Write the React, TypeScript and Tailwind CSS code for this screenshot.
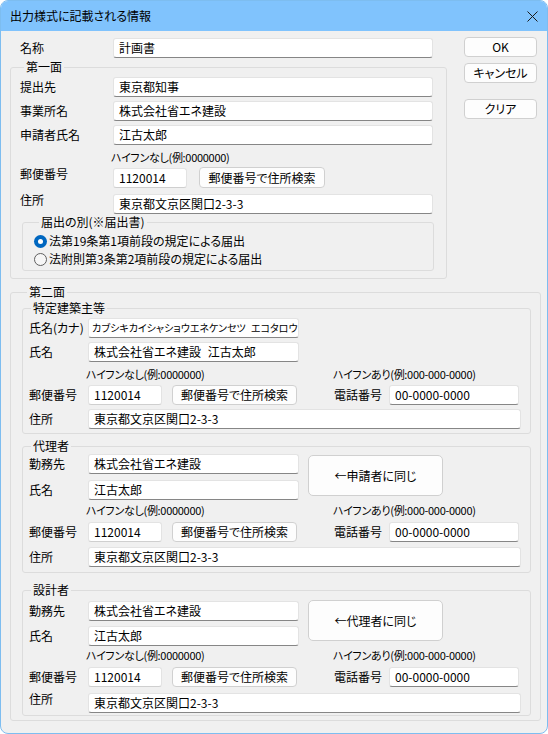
import React from 'react';

const box =
  'h-[20px] shrink-0 bg-white border border-[#e3e3e3] border-b-[#868686] rounded-[3px] leading-[18px] whitespace-nowrap overflow-hidden';
const btn =
  'shrink-0 bg-[#fdfdfd] border border-[#d0d0d0] rounded-[4px] flex items-center justify-center text-[12px] leading-[14px]';

function Input({ value, className, text }: { value: string; className: string; text?: string }) {
  return <div className={`${box} ${text ?? 'text-[12px] pl-[5px]'} ${className}`}>{value}</div>;
}

function Group({
  title,
  className,
  legend,
  children,
}: {
  title: string;
  className: string;
  legend: string;
  children: React.ReactNode;
}) {
  return (
    <fieldset className={`border border-[#dcdcdc] rounded-[3px] ${className}`}>
      <legend className={`px-[2px] text-[12px] leading-[16px] ${legend}`}>{title}</legend>
      {children}
    </fieldset>
  );
}

function Radio({ checked, label }: { checked?: boolean; label: string }) {
  return (
    <div className="flex items-center h-[18px]">
      {checked ? (
        <span className="w-[13px] h-[13px] rounded-full bg-[#0067c0] flex items-center justify-center">
          <span className="w-[5px] h-[5px] rounded-full bg-white" />
        </span>
      ) : (
        <span className="w-[13px] h-[13px] rounded-full border border-[#5f5f5f] bg-[#f6f6f6]" />
      )}
      <span className="ml-[2px] text-[12px] leading-[14px]">{label}</span>
    </div>
  );
}

// label column of the 第二面 groups
function L({ children, top }: { children: React.ReactNode; top?: boolean }) {
  return (
    <span className={`w-[59px] shrink-0 text-[12px] whitespace-nowrap ${top ? 'self-start leading-[12px]' : 'leading-[14px]'}`}>
      {children}
    </span>
  );
}

function Hints({ className }: { className: string }) {
  return (
    <div className={`flex pl-[57px] h-[14px] text-[11px] leading-[14px] tracking-[-0.3px] ${className}`}>
      <span className="w-[247px]">ハイフンなし(例:0000000)</span>
      <span>ハイフンあり(例:000-000-0000)</span>
    </div>
  );
}

function PostRow({ className }: { className: string }) {
  return (
    <div className={`flex items-center h-[20px] ${className}`}>
      <L>郵便番号</L>
      <Input value="1120014" className="w-[74px] border-b-[#cfcfcf]" />
      <div className={`${btn} ml-[10px] w-[125px] h-[20px]`}>郵便番号で住所検索</div>
      <span className="ml-[37px] w-[55px] text-[12px] leading-[14px]">電話番号</span>
      <Input value="00-0000-0000" className="w-[130px]" />
    </div>
  );
}

function AddrRow({ className, top }: { className: string; top?: boolean }) {
  return (
    <div className={`flex items-center h-[20px] ${className}`}>
      <L top={top}>住所</L>
      <Input value="東京都文京区関口2-3-3" className="w-[433px]" />
    </div>
  );
}

function Agent({
  same,
  className,
  gap,
  btnTop,
}: {
  same: string;
  className: string;
  gap: string;
  btnTop: string;
}) {
  return (
    <div className={`flex ${className}`}>
      <div className="flex flex-col">
        <div className="flex items-center h-[20px]">
          <L>勤務先</L>
          <Input value="株式会社省エネ建設" className="w-[211px]" />
        </div>
        <div className={`flex items-center h-[20px] ${gap}`}>
          <L>氏名</L>
          <Input value="江古太郎" className="w-[211px]" />
        </div>
      </div>
      <div className={`${btn} ml-[9px] w-[135px] h-[41px] rounded-[5px] ${btnTop}`}>{same}</div>
    </div>
  );
}

export default function App() {
  return (
    <div className="w-[548px] h-[734px] bg-white">
      <div className="w-[548px] h-[734px] rounded-[8px] border border-[#7dbdf0] bg-[#f0f0f0] overflow-hidden text-black font-['Noto_Sans_CJK_JP',sans-serif] [font-feature-settings:'palt']">
        {/* title bar */}
        <div className="h-[30px] bg-[#80c3fd] flex items-center pl-[9px]">
          <span className="text-[12px] leading-[14px]">出力様式に記載される情報</span>
          <svg width="11" height="11" viewBox="0 0 11 11" className="ml-auto mr-[9px]">
            <path d="M0.5 0.5L10.5 10.5M10.5 0.5L0.5 10.5" stroke="#1b1b1b" strokeWidth="1" />
          </svg>
        </div>

        <div className="pl-[9px]">
          <div className="flex">
            {/* left column */}
            <div className="w-[437px] flex flex-col">
              <div className="mt-[7px] flex items-center h-[20px] pl-[10px]">
                <span className="w-[93px] text-[12px] leading-[14px]">名称</span>
                <Input value="計画書" className="w-[320px]" />
              </div>

              <Group title="第一面" className="mt-[1px] w-[437px] pl-[9px] pb-[7px]" legend="ml-[4px]">
                <div className="mt-[2px] flex items-center h-[20px]">
                  <span className="w-[93px] text-[12px] leading-[14px]">提出先</span>
                  <Input value="東京都知事" className="w-[320px]" />
                </div>
                <div className="mt-[4px] flex items-center h-[20px]">
                  <span className="w-[93px] text-[12px] leading-[14px]">事業所名</span>
                  <Input value="株式会社省エネ建設" className="w-[320px]" />
                </div>
                <div className="mt-[4px] flex items-center h-[20px]">
                  <span className="w-[93px] text-[12px] leading-[14px]">申請者氏名</span>
                  <Input value="江古太郎" className="w-[320px]" />
                </div>
                <div className="mt-[5px] pl-[91px] h-[14px] text-[11px] leading-[14px] tracking-[-0.3px]">ハイフンなし(例:0000000)</div>
                <div className="mt-[4px] flex items-center h-[20px]">
                  <span className="w-[93px] self-start text-[12px] leading-[12px]">郵便番号</span>
                  <Input value="1120014" className="w-[74px] border-b-[#cfcfcf]" />
                  <div className={`${btn} ml-[12px] w-[126px] h-[21px] -mt-[1px]`}>郵便番号で住所検索</div>
                </div>
                <div className="mt-[6px] flex items-center h-[20px]">
                  <span className="w-[93px] self-start text-[12px] leading-[12px]">住所</span>
                  <Input value="東京都文京区関口2-3-3" className="w-[320px]" />
                </div>
                <Group title="届出の別(※届出書)" className="ml-[2px] w-[412px] pl-[11px] pb-[2px]" legend="ml-[5px]">
                  <div className="mt-[2px]">
                    <Radio checked label="法第19条第1項前段の規定による届出" />
                    <Radio label="法附則第3条第2項前段の規定による届出" />
                  </div>
                </Group>
              </Group>
            </div>

            {/* right column */}
            <div className="ml-[17px] w-[73px] flex flex-col">
              <div className={`${btn} mt-[6px] h-[20px] border-[#0067c0]`}>OK</div>
              <div className={`${btn} mt-[6px] h-[20px]`}>キャンセル</div>
              <div className={`${btn} mt-[16px] h-[20px]`}>クリア</div>
            </div>
          </div>

          <Group title="第二面" className="mt-[5px] w-[531px] pl-[11px] pb-[4px]" legend="ml-[5px]">
            <Group title="特定建築主等" className="w-[509px] pl-[6px] pb-[4px]" legend="ml-[2px]">
              <div className="mt-[2px] flex items-center h-[20px]">
                <L>氏名(カナ)</L>
                <Input
                  value="カブシキカイシャショウエネケンセツ エコタロウ"
                  text="text-[10px] pl-[3px] [word-spacing:3px]"
                  className="w-[211px]"
                />
              </div>
              <div className="mt-[4px] flex items-center h-[20px]">
                <L>氏名</L>
                <Input value="株式会社省エネ建設 江古太郎" className="w-[211px] [word-spacing:4px]" />
              </div>
              <Hints className="mt-[5px]" />
              <PostRow className="mt-[4px]" />
              <AddrRow className="mt-[4px]" />
            </Group>

            <Group title="代理者" className="mt-[4px] w-[509px] pl-[6px] pb-[5px]" legend="ml-[2px]">
              <Agent same="←申請者に同じ" className="mt-0" gap="mt-[6px]" btnTop="mt-[1px]" />
              <Hints className="mt-[3px]" />
              <PostRow className="mt-[5px]" />
              <AddrRow className="mt-[5px]" />
            </Group>

            <Group title="設計者" className="mt-[9px] w-[509px] pl-[6px] pb-[2px]" legend="ml-[2px]">
              <Agent same="←代理者に同じ" className="mt-[3px]" gap="mt-[5px]" btnTop="-mt-[1px]" />
              <Hints className="mt-[2px]" />
              <PostRow className="mt-[5px]" />
              <AddrRow className="mt-[6px]" top />
            </Group>
          </Group>
        </div>
      </div>
    </div>
  );
}
